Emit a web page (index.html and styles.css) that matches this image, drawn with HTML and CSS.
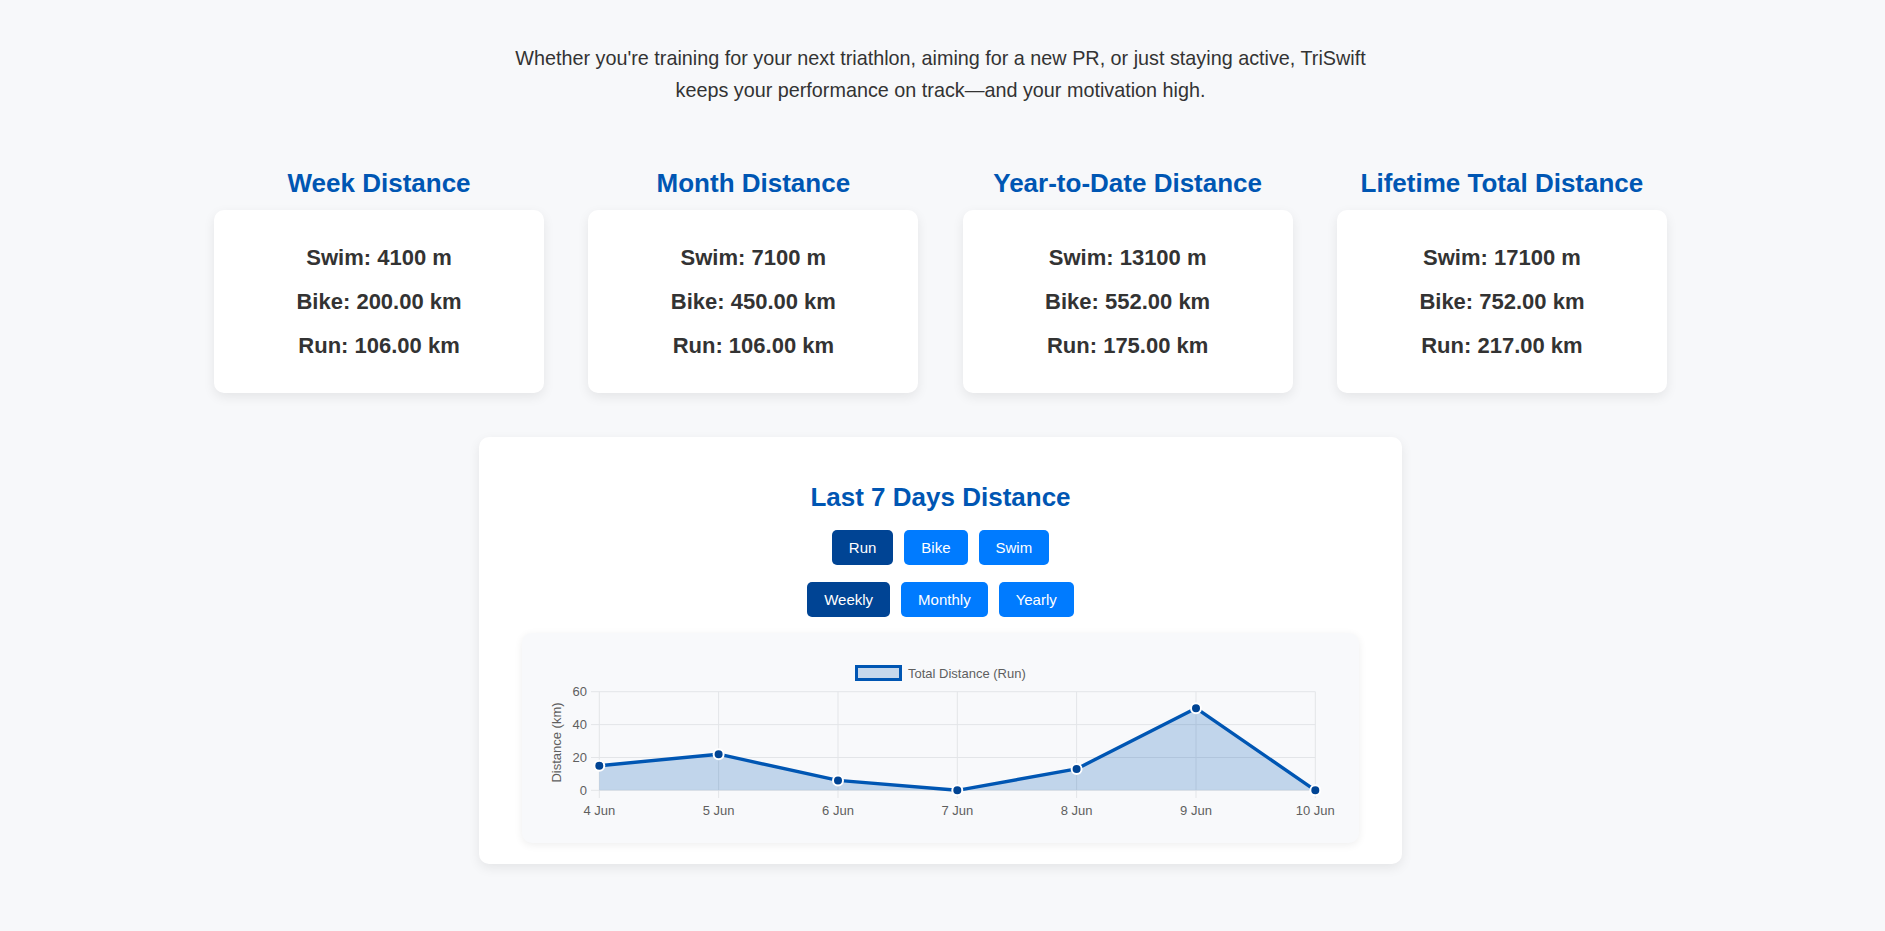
FILE: index.html
```html
<!DOCTYPE html>
<html lang="en">
<head>
<meta charset="utf-8">
<title>TriSwift Dashboard</title>
<link rel="stylesheet" href="styles.css">
</head>
<body>
<main class="page">
  <p class="intro">Whether you're training for your next triathlon, aiming for a new PR, or just staying active, TriSwift keeps your performance on track—and your motivation high.</p>

  <section class="stats">
    <div class="stat">
      <h2 class="stat-title">Week Distance</h2>
      <div class="stat-card">
        <p>Swim: 4100 m</p>
        <p>Bike: 200.00 km</p>
        <p>Run: 106.00 km</p>
      </div>
    </div>
    <div class="stat">
      <h2 class="stat-title">Month Distance</h2>
      <div class="stat-card">
        <p>Swim: 7100 m</p>
        <p>Bike: 450.00 km</p>
        <p>Run: 106.00 km</p>
      </div>
    </div>
    <div class="stat">
      <h2 class="stat-title">Year-to-Date Distance</h2>
      <div class="stat-card">
        <p>Swim: 13100 m</p>
        <p>Bike: 552.00 km</p>
        <p>Run: 175.00 km</p>
      </div>
    </div>
    <div class="stat">
      <h2 class="stat-title">Lifetime Total Distance</h2>
      <div class="stat-card">
        <p>Swim: 17100 m</p>
        <p>Bike: 752.00 km</p>
        <p>Run: 217.00 km</p>
      </div>
    </div>
  </section>

  <section class="chart-card">
    <h2 class="chart-title">Last 7 Days Distance</h2>
    <div class="btn-row">
      <button class="btn active">Run</button>
      <button class="btn">Bike</button>
      <button class="btn">Swim</button>
    </div>
    <div class="btn-row">
      <button class="btn active">Weekly</button>
      <button class="btn">Monthly</button>
      <button class="btn">Yearly</button>
    </div>
    <div class="chart-box">
      <svg class="chart" width="837" height="210" viewBox="0 0 837 210" xmlns="http://www.w3.org/2000/svg">
        <!-- legend -->
        <rect x="334.5" y="33.5" width="44" height="13" fill="rgba(0,86,179,0.2)" stroke="#0056b3" stroke-width="3"/>
        <text class="lbl" x="386" y="44.5">Total Distance (Run)</text>

        <!-- grid -->
        <g stroke="#e3e5e8" stroke-width="1">
          <line x1="69" y1="58.7" x2="793.3" y2="58.7"/>
          <line x1="69" y1="91.6" x2="793.3" y2="91.6"/>
          <line x1="69" y1="124.5" x2="793.3" y2="124.5"/>
          <line x1="69" y1="157.3" x2="793.3" y2="157.3"/>
          <line x1="77.3" y1="58.7" x2="77.3" y2="165"/>
          <line x1="196.6" y1="58.7" x2="196.6" y2="165"/>
          <line x1="316" y1="58.7" x2="316" y2="165"/>
          <line x1="435.3" y1="58.7" x2="435.3" y2="165"/>
          <line x1="554.6" y1="58.7" x2="554.6" y2="165"/>
          <line x1="674" y1="58.7" x2="674" y2="165"/>
          <line x1="793.3" y1="58.7" x2="793.3" y2="165"/>
        </g>

        <!-- y labels -->
        <g class="lbl" text-anchor="end">
          <text x="65" y="63.2">60</text>
          <text x="65" y="96.1">40</text>
          <text x="65" y="129">20</text>
          <text x="65" y="161.8">0</text>
        </g>
        <text class="lbl" text-anchor="middle" transform="translate(39.2 109.5) rotate(-90)">Distance (km)</text>

        <!-- x labels -->
        <g class="lbl" text-anchor="middle">
          <text x="77.3" y="181.5">4 Jun</text>
          <text x="196.6" y="181.5">5 Jun</text>
          <text x="316" y="181.5">6 Jun</text>
          <text x="435.3" y="181.5">7 Jun</text>
          <text x="554.6" y="181.5">8 Jun</text>
          <text x="674" y="181.5">9 Jun</text>
          <text x="793.3" y="181.5">10 Jun</text>
        </g>

        <!-- area & line -->
        <polygon fill="rgba(0,86,179,0.22)" points="77.3,157.3 77.3,132.7 196.6,121.2 316,147.4 435.3,157.3 554.6,135.9 674,75.2 793.3,157.3"/>
        <polyline fill="none" stroke="#0056b3" stroke-width="3.4" stroke-linejoin="round" points="77.3,132.7 196.6,121.2 316,147.4 435.3,157.3 554.6,135.9 674,75.2 793.3,157.3"/>
        <g fill="#004494" stroke="#ffffff" stroke-width="2">
          <circle cx="77.3" cy="132.7" r="5"/>
          <circle cx="196.6" cy="121.2" r="5"/>
          <circle cx="316" cy="147.4" r="5"/>
          <circle cx="435.3" cy="157.3" r="5"/>
          <circle cx="554.6" cy="135.9" r="5"/>
          <circle cx="674" cy="75.2" r="5"/>
          <circle cx="793.3" cy="157.3" r="5"/>
        </g>
      </svg>
    </div>
  </section>
</main>
</body>
</html>
```

FILE: styles.css
```css
* {
  box-sizing: border-box;
}

html, body {
  margin: 0;
  padding: 0;
}

body {
  background: #f7f8fa;
  font-family: "Liberation Sans", Arial, sans-serif;
  color: #333;
}

.page {
  padding: 42px 4px 60px 0;
  display: flex;
  flex-direction: column;
  align-items: center;
}

.intro {
  max-width: 880px;
  margin: 0;
  text-align: center;
  font-size: 19.8px;
  line-height: 32.4px;
  color: #333;
}

.stats {
  margin-top: 61px;
  display: grid;
  grid-template-columns: repeat(4, 330px);
  column-gap: 44.3px;
  justify-content: center;
}

.stat {
  display: flex;
  flex-direction: column;
}

.stat-title {
  margin: 0 0 12px;
  font-size: 26px;
  line-height: 30px;
  font-weight: bold;
  color: #0056b3;
  text-align: center;
}

.stat-card {
  background: #fff;
  border-radius: 10px;
  box-shadow: 0 4px 12px rgba(0, 0, 0, 0.08);
  padding: 35px 20px 34px;
  display: flex;
  flex-direction: column;
  gap: 18px;
  text-align: center;
}

.stat-card p {
  margin: 0;
  font-size: 22px;
  line-height: 26px;
  font-weight: bold;
  color: #333;
}

.chart-card {
  margin-top: 44px;
  width: 923px;
  background: #fff;
  border-radius: 10px;
  box-shadow: 0 4px 12px rgba(0, 0, 0, 0.08);
  padding: 45px 43px 21px;
  display: flex;
  flex-direction: column;
  align-items: center;
}

.chart-title {
  margin: 0 0 18px;
  font-size: 26px;
  line-height: 30px;
  font-weight: bold;
  color: #0056b3;
}

.btn-row {
  display: flex;
  gap: 11px;
  margin-bottom: 17px;
}

.btn-row + .btn-row {
  margin-bottom: 16px;
}

.btn {
  height: 35px;
  padding: 0 17px;
  border: none;
  border-radius: 5px;
  background: #007bff;
  color: #fff;
  font-family: "Liberation Sans", Arial, sans-serif;
  font-size: 15px;
  cursor: pointer;
}

.btn.active {
  background: #004494;
}

.chart-box {
  width: 837px;
  height: 210px;
  background: #f8f9fb;
  border-radius: 10px;
  box-shadow: 0 2px 8px rgba(0, 0, 0, 0.07);
}

.chart {
  display: block;
}

.lbl {
  font-family: "Liberation Sans", Arial, sans-serif;
  font-size: 13px;
  fill: #5f5f5f;
}
```
